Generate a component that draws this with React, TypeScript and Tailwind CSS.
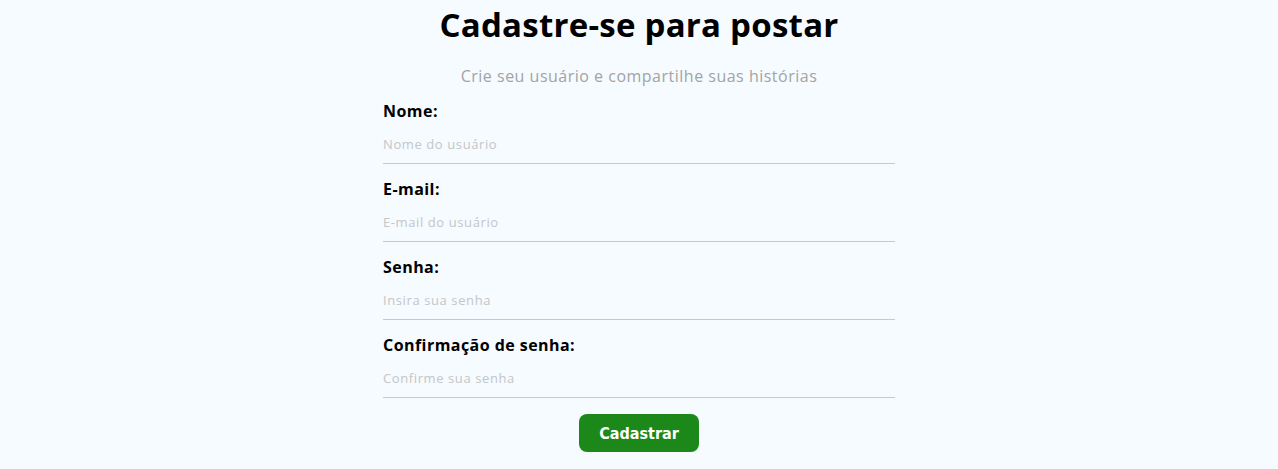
import React from "react";

const fields = [
  { label: "Nome:", placeholder: "Nome do usuário", type: "text", mt: "mt-[10px]" },
  { label: "E-mail:", placeholder: "E-mail do usuário", type: "email", mt: "mt-[14px]" },
  { label: "Senha:", placeholder: "Insira sua senha", type: "password", mt: "mt-[14px]" },
  { label: "Confirmação de senha:", placeholder: "Confirme sua senha", type: "password", mt: "mt-[14px]" },
];

export default function App() {
  return (
    <div
      className="min-h-[469px] w-full bg-[#f5fbff] flex flex-col items-center"
      style={{ fontFamily: '"Open Sans", "Noto Sans", sans-serif' }}
    >
      <h1 className="h-[50px] leading-[50px] text-[33px] font-bold text-black tracking-[0.25px]">
        Cadastre-se para postar
      </h1>
      <p className="mt-[12px] h-[28px] leading-[28px] text-[16px] text-[#a3a3a3] tracking-[0.5px]">
        Crie seu usuário e compartilhe suas histórias
      </p>
      <form className="w-[512px] flex flex-col" onSubmit={(e) => e.preventDefault()}>
        {fields.map((f) => (
          <div key={f.label} className={`${f.mt} flex flex-col`}>
            <label className="leading-[22px] text-[16px] font-bold text-black tracking-[0.45px]">{f.label}</label>
            <input
              type={f.type}
              placeholder={f.placeholder}
              className="pt-[11px] pb-[8px] leading-[22px] text-[13px] tracking-[0.6px] bg-transparent outline-none border-b border-[#c9c9c9] placeholder:text-[#c4c6c8]"
            />
          </div>
        ))}
        <div className="flex justify-center mt-[16px]">
          <button
            type="submit"
            className="w-[120px] h-[38px] pt-[2px] rounded-[8px] bg-[#1d881a] text-white text-[16px] font-bold"
            style={{ fontFamily: '"DejaVu Sans Condensed", "DejaVu Sans", sans-serif' }}
          >
            Cadastrar
          </button>
        </div>
      </form>
    </div>
  );
}
